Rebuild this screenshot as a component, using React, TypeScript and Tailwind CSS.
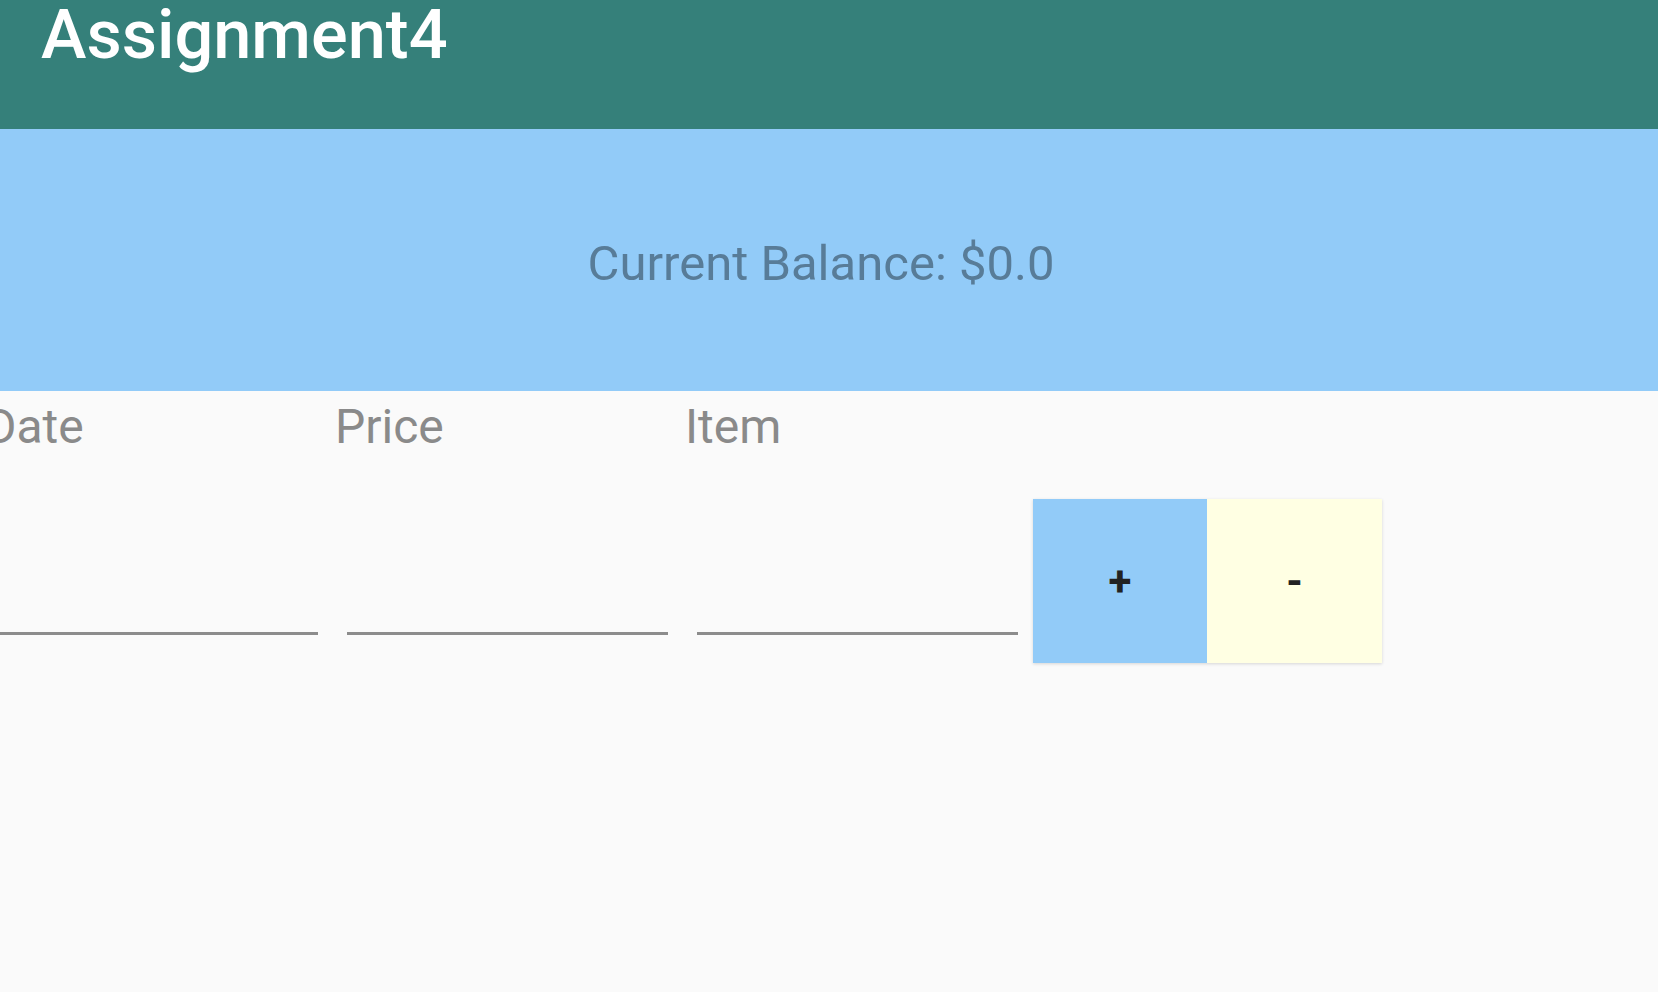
export default function App() {
  return (
    <div className="w-full h-screen overflow-hidden bg-[#fafafa]" style={{ fontFamily: 'Roboto, "Noto Sans", sans-serif' }}>
      {/* App bar */}
      <header className="h-[129px] bg-[#35807a] px-[41px] pt-[1px]">
        <h1 className="text-[68.5px] font-medium leading-none text-white">Assignment4</h1>
      </header>

      {/* Balance panel */}
      <section className="h-[262px] bg-[#92cbf8] flex items-center justify-center pt-[6px] pr-[16px]">
        <span className="text-[49px] leading-none text-[#587c98]">Current Balance: $0.0</span>
      </section>

      {/* Entry row */}
      <div className="flex items-start pt-[12px] -ml-[3px]">
        <div className="flex gap-[29px]">
          {['Date', 'Price', 'Item'].map((label) => (
            <div key={label} className="w-[321px]">
              <div className="h-[48px] -ml-[12px] text-[48px] leading-none text-[#8a8a8a]">{label}</div>
              <div className="h-[184px] border-b-[3px] border-[#8c8c8c]" />
            </div>
          ))}
        </div>
        <div className="ml-[15px] mt-[96px] flex shadow-[0_1px_3px_rgba(0,0,0,0.15)]">
          <button type="button" className="w-[174px] h-[164px] bg-[#92cbf8] text-[42px] font-bold text-[#222]">+</button>
          <button type="button" className="w-[175px] h-[164px] bg-[#ffffe3] text-[42px] font-bold text-[#222]">-</button>
        </div>
      </div>
    </div>
  );
}
